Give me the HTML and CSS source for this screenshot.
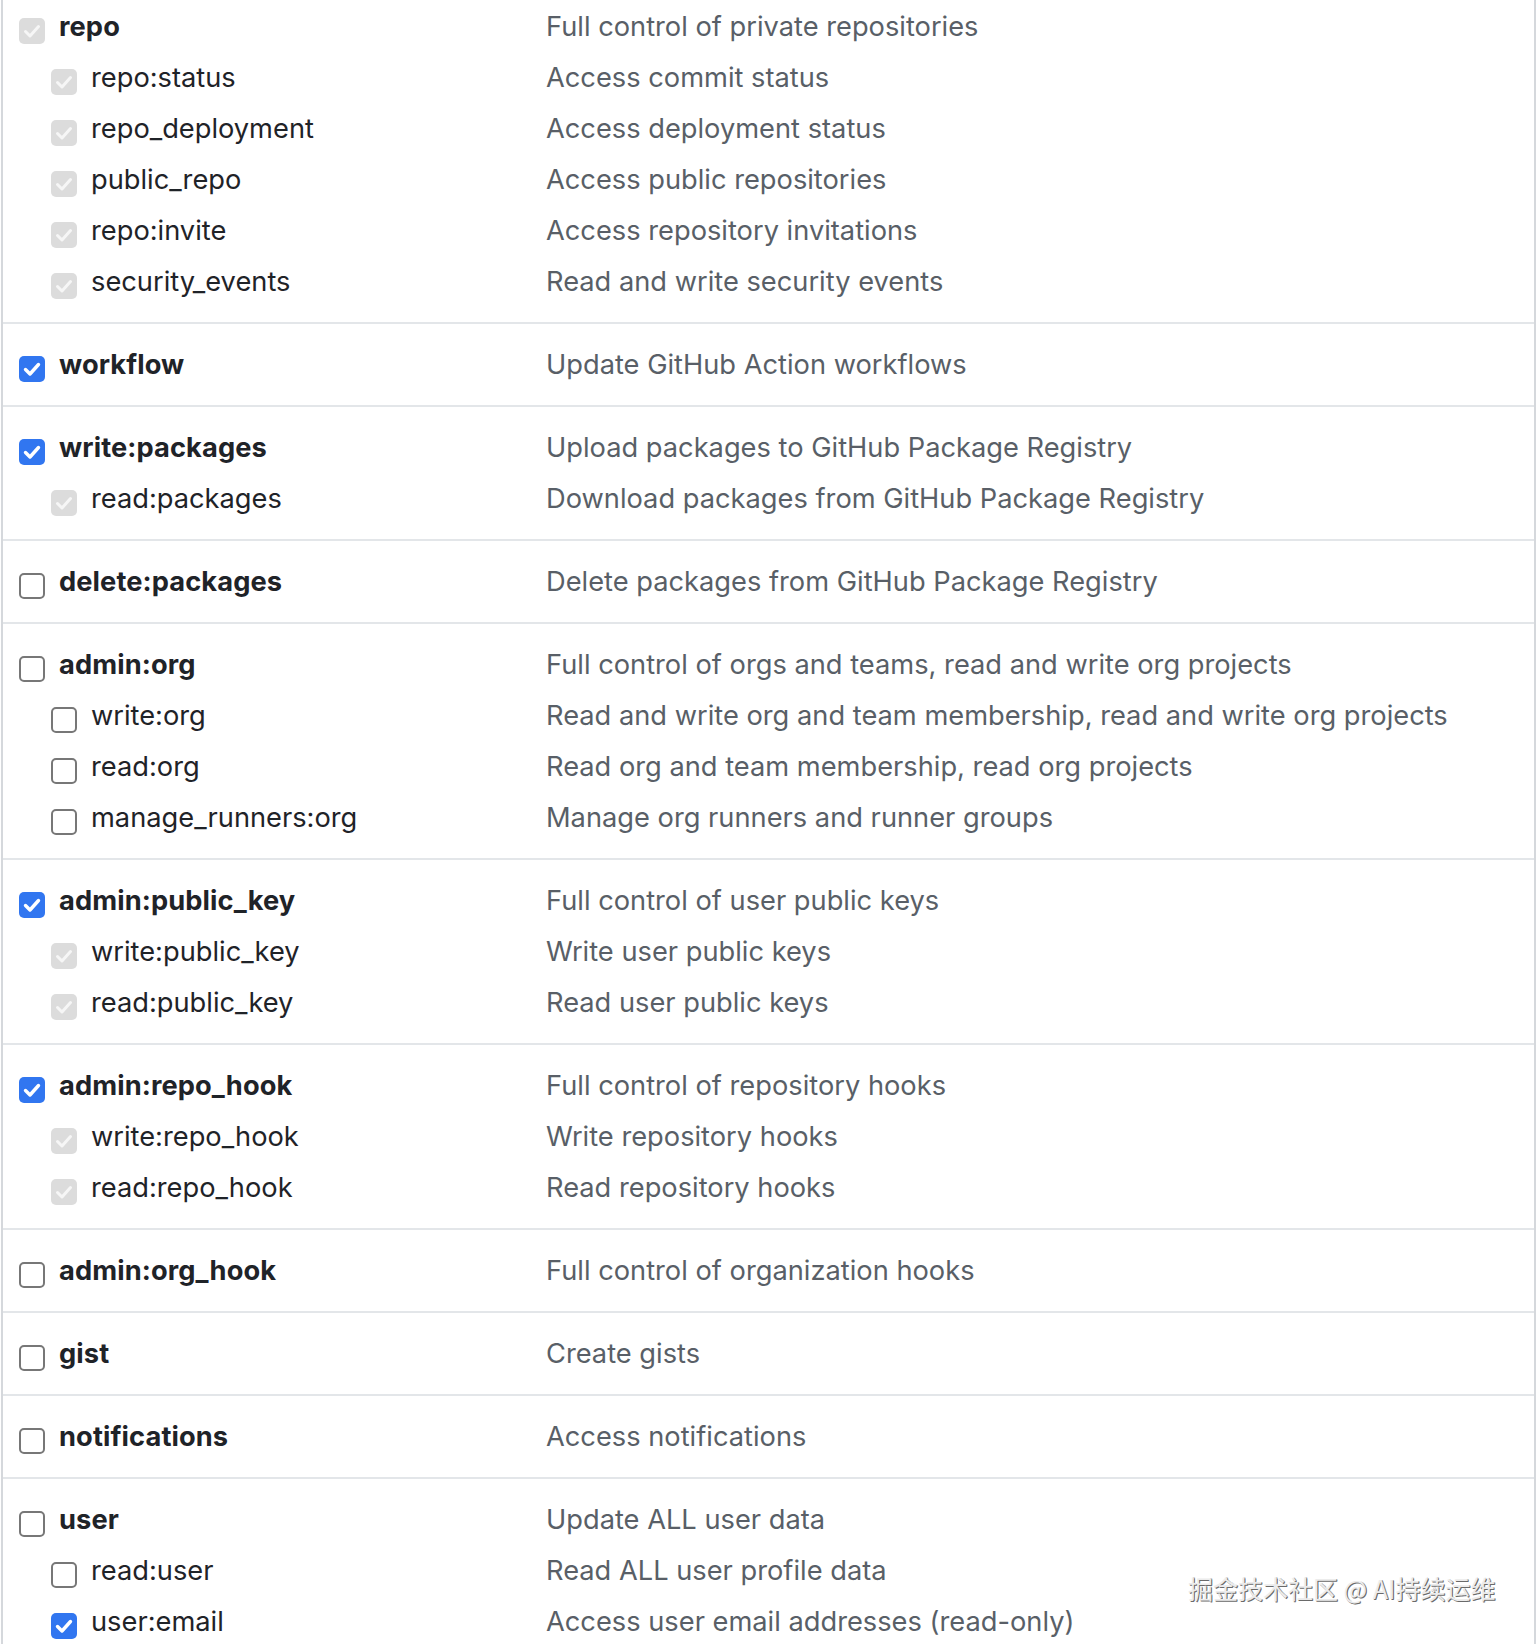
FILE: index.html
```html
<!DOCTYPE html>
<html lang="en">
<head>
<meta charset="utf-8">
<title>Scopes</title>
<link rel="stylesheet" href="styles.css">
</head>
<body>
<div class="scopes">
  <div class="group first">
    <div class="row"><div class="name top"><span class="cb dis"><svg viewBox="0 0 26 26"><path d="M6.5 13.5l4.5 4.5L19.5 8.5"/></svg></span><b>repo</b></div><div class="desc">Full control of private repositories</div></div>
    <div class="row"><div class="name sub"><span class="cb dis"><svg viewBox="0 0 26 26"><path d="M6.5 13.5l4.5 4.5L19.5 8.5"/></svg></span><span>repo:status</span></div><div class="desc">Access commit status</div></div>
    <div class="row"><div class="name sub"><span class="cb dis"><svg viewBox="0 0 26 26"><path d="M6.5 13.5l4.5 4.5L19.5 8.5"/></svg></span><span>repo_deployment</span></div><div class="desc">Access deployment status</div></div>
    <div class="row"><div class="name sub"><span class="cb dis"><svg viewBox="0 0 26 26"><path d="M6.5 13.5l4.5 4.5L19.5 8.5"/></svg></span><span>public_repo</span></div><div class="desc">Access public repositories</div></div>
    <div class="row"><div class="name sub"><span class="cb dis"><svg viewBox="0 0 26 26"><path d="M6.5 13.5l4.5 4.5L19.5 8.5"/></svg></span><span>repo:invite</span></div><div class="desc">Access repository invitations</div></div>
    <div class="row"><div class="name sub"><span class="cb dis"><svg viewBox="0 0 26 26"><path d="M6.5 13.5l4.5 4.5L19.5 8.5"/></svg></span><span>security_events</span></div><div class="desc">Read and write security events</div></div>
  </div>
  <div class="group">
    <div class="row"><div class="name top"><span class="cb on"><svg viewBox="0 0 26 26"><path d="M6.5 13.5l4.5 4.5L19.5 8.5"/></svg></span><b>workflow</b></div><div class="desc">Update GitHub Action workflows</div></div>
  </div>
  <div class="group">
    <div class="row"><div class="name top"><span class="cb on"><svg viewBox="0 0 26 26"><path d="M6.5 13.5l4.5 4.5L19.5 8.5"/></svg></span><b>write:packages</b></div><div class="desc">Upload packages to GitHub Package Registry</div></div>
    <div class="row"><div class="name sub"><span class="cb dis"><svg viewBox="0 0 26 26"><path d="M6.5 13.5l4.5 4.5L19.5 8.5"/></svg></span><span>read:packages</span></div><div class="desc">Download packages from GitHub Package Registry</div></div>
  </div>
  <div class="group">
    <div class="row"><div class="name top"><span class="cb off"></span><b>delete:packages</b></div><div class="desc">Delete packages from GitHub Package Registry</div></div>
  </div>
  <div class="group">
    <div class="row"><div class="name top"><span class="cb off"></span><b>admin:org</b></div><div class="desc">Full control of orgs and teams, read and write org projects</div></div>
    <div class="row"><div class="name sub"><span class="cb off"></span><span>write:org</span></div><div class="desc">Read and write org and team membership, read and write org projects</div></div>
    <div class="row"><div class="name sub"><span class="cb off"></span><span>read:org</span></div><div class="desc">Read org and team membership, read org projects</div></div>
    <div class="row"><div class="name sub"><span class="cb off"></span><span>manage_runners:org</span></div><div class="desc">Manage org runners and runner groups</div></div>
  </div>
  <div class="group">
    <div class="row"><div class="name top"><span class="cb on"><svg viewBox="0 0 26 26"><path d="M6.5 13.5l4.5 4.5L19.5 8.5"/></svg></span><b>admin:public_key</b></div><div class="desc">Full control of user public keys</div></div>
    <div class="row"><div class="name sub"><span class="cb dis"><svg viewBox="0 0 26 26"><path d="M6.5 13.5l4.5 4.5L19.5 8.5"/></svg></span><span>write:public_key</span></div><div class="desc">Write user public keys</div></div>
    <div class="row"><div class="name sub"><span class="cb dis"><svg viewBox="0 0 26 26"><path d="M6.5 13.5l4.5 4.5L19.5 8.5"/></svg></span><span>read:public_key</span></div><div class="desc">Read user public keys</div></div>
  </div>
  <div class="group">
    <div class="row"><div class="name top"><span class="cb on"><svg viewBox="0 0 26 26"><path d="M6.5 13.5l4.5 4.5L19.5 8.5"/></svg></span><b>admin:repo_hook</b></div><div class="desc">Full control of repository hooks</div></div>
    <div class="row"><div class="name sub"><span class="cb dis"><svg viewBox="0 0 26 26"><path d="M6.5 13.5l4.5 4.5L19.5 8.5"/></svg></span><span>write:repo_hook</span></div><div class="desc">Write repository hooks</div></div>
    <div class="row"><div class="name sub"><span class="cb dis"><svg viewBox="0 0 26 26"><path d="M6.5 13.5l4.5 4.5L19.5 8.5"/></svg></span><span>read:repo_hook</span></div><div class="desc">Read repository hooks</div></div>
  </div>
  <div class="group">
    <div class="row"><div class="name top"><span class="cb off"></span><b>admin:org_hook</b></div><div class="desc">Full control of organization hooks</div></div>
  </div>
  <div class="group">
    <div class="row"><div class="name top"><span class="cb off"></span><b>gist</b></div><div class="desc">Create gists</div></div>
  </div>
  <div class="group">
    <div class="row"><div class="name top"><span class="cb off"></span><b>notifications</b></div><div class="desc">Access notifications</div></div>
  </div>
  <div class="group">
    <div class="row"><div class="name top"><span class="cb off"></span><b>user</b></div><div class="desc">Update ALL user data</div></div>
    <div class="row"><div class="name sub"><span class="cb off"></span><span>read:user</span></div><div class="desc">Read ALL user profile data</div></div>
    <div class="row"><div class="name sub"><span class="cb on"><svg viewBox="0 0 26 26"><path d="M6.5 13.5l4.5 4.5L19.5 8.5"/></svg></span><span>user:email</span></div><div class="desc">Access user email addresses (read-only)</div></div>
  </div>
  <div class="watermark">掘金技术社区 @ AI持续运维</div>
</div>
</body>
</html>
```

FILE: styles.css
```css
html, body {
  margin: 0;
  padding: 0;
  background: #ffffff;
}
body {
  height: 1644px;
  overflow: hidden;
  font-family: "Inter", "Liberation Sans", "Noto Sans CJK SC", sans-serif;
  font-size: 27.25px;
  color: #1f2328;
}
.scopes {
  position: relative;
  margin-left: 1px;
  width: 1531px;
  border-left: 2px solid #d5d8dc;
  border-right: 2px solid #d5d8dc;
  min-height: 1700px;
}
.group {
  padding: 16px 0 14px;
  border-top: 2px solid #e3e6e9;
}
.group.first {
  padding-top: 2px;
  border-top: none;
}
.row {
  display: flex;
  align-items: center;
  height: 51px;
}
.row > .name, .row > .desc {
  position: relative;
  top: -1px;
}
.name {
  width: 543px;
  flex: none;
  display: flex;
  align-items: center;
  white-space: nowrap;
}
.name.top { padding-left: 16px; box-sizing: border-box; }
.name.sub { padding-left: 48px; box-sizing: border-box; }
.name b { font-weight: 650; color: #1f2328; letter-spacing: 0.1px; }
.name span:last-child { color: #1f2328; }
.desc {
  color: #595f67;
  white-space: nowrap;
}
.cb {
  flex: none;
  width: 26px;
  height: 26px;
  margin-top: 8px;
  margin-right: 14px;
  border-radius: 5px;
  box-sizing: border-box;
  display: flex;
  align-items: center;
  justify-content: center;
}
.cb svg {
  width: 26px;
  height: 26px;
  fill: none;
  stroke: #ffffff;
  stroke-width: 3.4;
  stroke-linecap: round;
  stroke-linejoin: round;
}
.cb.on { background: #3176f0; }
.cb.dis { background: #dcdcdc; }
.cb.dis svg { stroke: #f6f6f6; stroke-width: 3; }
.cb.off {
  background: #ffffff;
  border: 2px solid #777777;
}
.watermark {
  position: absolute;
  left: 1185px;
  top: 1570px;
  font-family: "Noto Sans CJK SC", sans-serif;
  font-size: 25px;
  letter-spacing: 0;
  color: #ececec;
  text-shadow: 1px 1px 0 #6a6a6a, -1px -1px 0 #ffffff, 1px 0 0 #9a9a9a;
  white-space: nowrap;
}
```
